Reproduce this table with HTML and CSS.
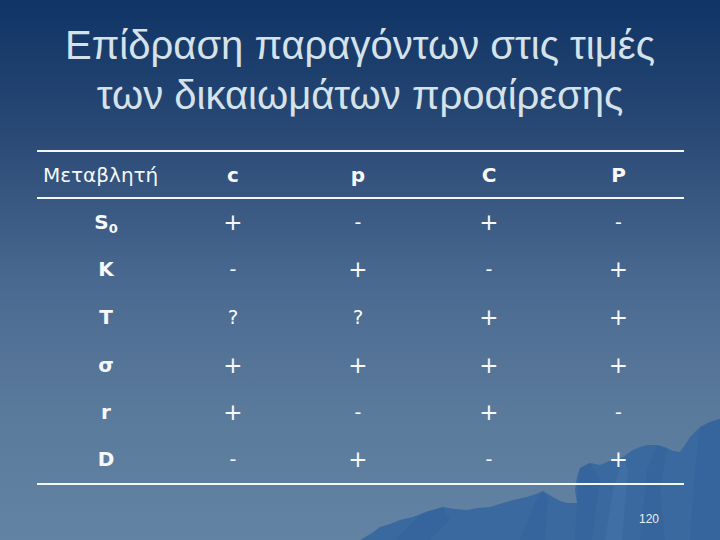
FILE: index.html
```html
<!DOCTYPE html>
<html lang="el">
<head>
<meta charset="utf-8">
<title>Επίδραση παραγόντων</title>
<link rel="stylesheet" href="styles.css">
</head>
<body>
<div class="slide">
  <svg class="mountains" viewBox="360 415 360 125" width="360" height="125" aria-hidden="true">
    <polygon class="m-base" points="360,540 372,533 380,527 390,524 400,520 413,517 428,511 443,507 455,509 467,510 478,508 490,507 503,503 513,500 527,497 536,494 543,491 548,494 553,497 560,501 567,503 577,503 575,490 577,477 580,468 590,463 600,465 607,462 613,460 623,457 633,450 640,447 647,445 657,445 667,448 673,451 680,452 685,445 690,437 700,427 710,422 720,419 720,540"/>
    <polygon class="m-dark" points="395,540 420,515 443,507 450,520 430,540"/>
    <polygon class="m-dark" points="520,540 536,500 543,491 548,500 545,540"/>
    <polygon class="m-dark" points="577,503 580,468 590,463 600,480 592,540 575,540"/>
    <polygon class="m-dark" points="640,540 647,470 657,445 667,448 660,490 665,540"/>
    <polygon class="m-dark" points="690,540 695,470 700,427 710,422 720,419 720,540"/>
    <polygon class="m-light" points="605,540 613,490 623,457 628,470 622,540"/>
  </svg>
  <h1 class="title">Επίδραση παραγόντων στις τιμές<br>των δικαιωμάτων προαίρεσης</h1>
  <table class="grid">
    <colgroup>
      <col class="c1"><col class="c2"><col class="c3"><col class="c4"><col class="c5">
    </colgroup>
    <thead>
      <tr>
        <th class="var">Μεταβλητή</th><th>c</th><th>p</th><th>C</th><th>P</th>
      </tr>
    </thead>
    <tbody>
      <tr><th>S<sub>0</sub></th><td>+</td><td class="minus">-</td><td>+</td><td class="minus">-</td></tr>
      <tr><th>K</th><td class="minus">-</td><td>+</td><td class="minus">-</td><td>+</td></tr>
      <tr><th>T</th><td class="q">?</td><td class="q">?</td><td>+</td><td>+</td></tr>
      <tr><th>σ</th><td>+</td><td>+</td><td>+</td><td>+</td></tr>
      <tr><th>r</th><td>+</td><td class="minus">-</td><td>+</td><td class="minus">-</td></tr>
      <tr><th>D</th><td class="minus">-</td><td>+</td><td class="minus">-</td><td>+</td></tr>
    </tbody>
  </table>
  <div class="page-num">120</div>
</div>
</body>
</html>
```
FILE: styles.css
```css
html, body {
  margin: 0;
  padding: 0;
}
body {
  width: 720px;
  height: 540px;
  overflow: hidden;
}
.slide {
  position: relative;
  width: 720px;
  height: 540px;
  background: linear-gradient(to bottom, #0f3465 0%, #2b4a76 26%, #4a6990 52%, #5a7a9c 76%, #6383a5 100%);
  display: flex;
  flex-direction: column;
  align-items: flex-start;
  overflow: hidden;
}
.mountains {
  position: absolute;
  right: 0;
  bottom: 0;
}
.m-base { fill: #3a69a0; }
.m-dark { fill: #2f5f955e; }
.m-light { fill: #4a7aae55; }
.title {
  margin: 20px 0 0 0;
  width: 720px;
  text-align: center;
  font-family: "Liberation Sans", Arial, sans-serif;
  font-weight: normal;
  font-size: 40px;
  line-height: 50px;
  color: #d5e2ea;
  position: relative;
}
.grid {
  position: relative;
  margin: 30px 0 0 37px;
  width: 647px;
  border-collapse: collapse;
  table-layout: fixed;
  font-family: "DejaVu Sans", Verdana, sans-serif;
  color: #f6f8fa;
  border-top: 2px solid #f4f6f8;
  border-bottom: 2px solid #f4f6f8;
}
.c1 { width: 138px; }
.c2 { width: 116px; }
.c3 { width: 134px; }
.c4 { width: 128px; }
.c5 { width: 131px; }
.grid thead tr {
  border-bottom: 2px solid #f4f6f8;
  height: 47px;
}
.grid tbody tr {
  height: 47.6px;
}
.grid th, .grid td {
  padding: 0;
  text-align: center;
  vertical-align: middle;
}
.grid th {
  font-weight: bold;
  font-size: 20px;
}
.grid th.var {
  text-align: left;
  padding-left: 6px;
  font-weight: normal;
  font-size: 20px;
}
.grid td {
  font-size: 23px;
  font-weight: normal;
}
.grid td.minus {
  font-size: 19px;
}
.grid td.q {
  font-size: 20px;
}
.grid sub {
  font-size: 13px;
  vertical-align: -4px;
  line-height: 0;
}
.page-num {
  position: absolute;
  right: 61px;
  bottom: 14px;
  font-family: "Liberation Sans", Arial, sans-serif;
  font-size: 12px;
  color: #e8eef4;
}
```
